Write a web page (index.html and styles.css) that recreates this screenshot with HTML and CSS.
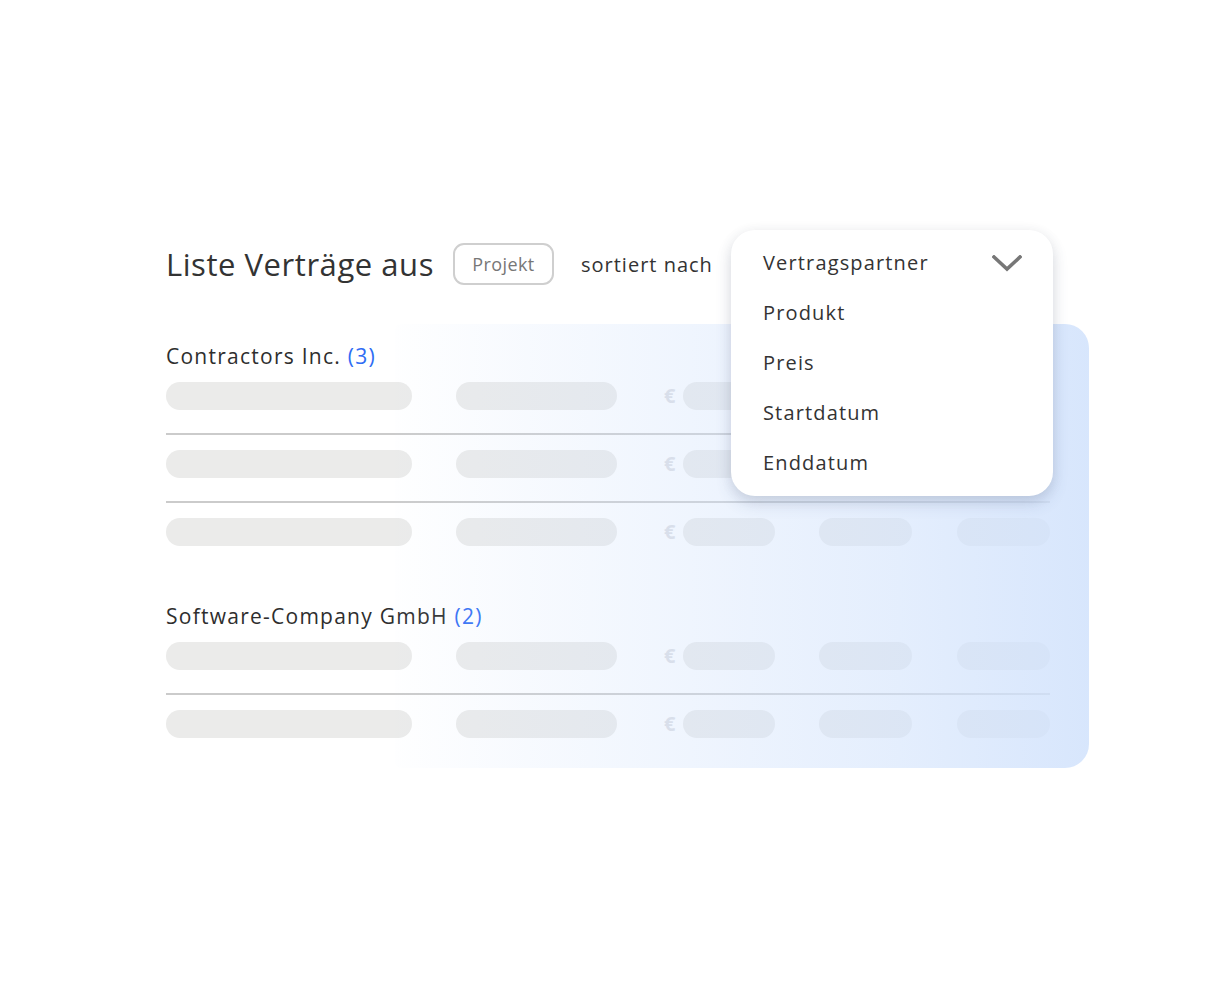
FILE: index.html
```html
<!DOCTYPE html>
<html lang="de">
<head>
<meta charset="utf-8">
<title>Liste Verträge</title>
<link rel="stylesheet" href="styles.css">
</head>
<body>
<div class="page">
  <div class="header">
    <h1 class="title">Liste Verträge aus</h1>
    <span class="pill">Projekt</span>
    <span class="sort-label">sortiert nach</span>
    <div class="dropdown">
      <ul class="options">
        <li>Vertragspartner</li>
        <li>Produkt</li>
        <li>Preis</li>
        <li>Startdatum</li>
        <li>Enddatum</li>
      </ul>
      <svg class="chevron" width="30" height="17" viewBox="0 0 30 17"><path d="M2 2 L15 14 L28 2" fill="none" stroke="#777" stroke-width="3.6" stroke-linecap="square"/></svg>
    </div>
  </div>

  <section class="group group-first">
    <h2 class="group-title">Contractors Inc. <span class="count">(3)</span></h2>
    <div class="row"><span class="bar b1"></span><span class="bar b2"></span><span class="euro">€</span><span class="bar b3"></span><span class="bar b4"></span><span class="bar b5"></span></div>
    <div class="divider"></div>
    <div class="row"><span class="bar b1"></span><span class="bar b2"></span><span class="euro">€</span><span class="bar b3"></span><span class="bar b4"></span><span class="bar b5"></span></div>
    <div class="divider"></div>
    <div class="row"><span class="bar b1"></span><span class="bar b2"></span><span class="euro">€</span><span class="bar b3"></span><span class="bar b4"></span><span class="bar b5"></span></div>
  </section>

  <section class="group group-second">
    <h2 class="group-title">Software-Company GmbH <span class="count">(2)</span></h2>
    <div class="row"><span class="bar b1"></span><span class="bar b2"></span><span class="euro">€</span><span class="bar b3"></span><span class="bar b4"></span><span class="bar b5"></span></div>
    <div class="divider"></div>
    <div class="row"><span class="bar b1"></span><span class="bar b2"></span><span class="euro">€</span><span class="bar b3"></span><span class="bar b4"></span><span class="bar b5"></span></div>
  </section>

  <div class="panel"></div>
</div>
</body>
</html>
```

FILE: styles.css
```css
* { box-sizing: border-box; }

html, body {
  margin: 0;
  padding: 0;
  background: #ffffff;
}

body {
  font-family: "Open Sans", "Noto Sans", "Liberation Sans", sans-serif;
  color: #2e2e2e;
  width: 1215px;
  height: 1000px;
  overflow: hidden;
}

.page {
  position: relative;
  width: 884px;
  margin-left: 166px;
  padding-top: 243px;
}

/* tinted glass panel lying over the placeholder rows */
.panel {
  position: absolute;
  left: 229px;
  top: 324px;
  width: 694px;
  height: 444px;
  border-radius: 6px 24px 24px 6px;
  background: linear-gradient(90deg,
    rgba(209, 226, 252, 0.02) 0%,
    rgba(209, 226, 252, 0.18) 20%,
    rgba(209, 226, 252, 0.34) 42%,
    rgba(209, 226, 252, 0.58) 72%,
    rgba(209, 226, 252, 0.86) 100%);
  z-index: 1;
  pointer-events: none;
}

.header {
  position: relative;
  z-index: 3;
  display: flex;
  align-items: center;
  height: 42px;
}

.title {
  margin: 0 19px 0 0;
  font-size: 31px;
  font-weight: 400;
  letter-spacing: 0.55px;
  color: #333;
  white-space: nowrap;
}

.pill {
  display: flex;
  align-items: center;
  justify-content: center;
  width: 101px;
  height: 42px;
  border: 2px solid #cfcfcf;
  border-radius: 11px;
  font-size: 18px;
  letter-spacing: 0.4px;
  color: #777;
  margin-right: 27px;
}

.sort-label {
  font-size: 20px;
  letter-spacing: 1px;
  color: #333;
  white-space: nowrap;
}

.dropdown {
  position: absolute;
  left: 565px;
  top: -13px;
  width: 322px;
  height: 266px;
  background: #fff;
  border-radius: 24px;
  box-shadow: 0 2px 14px rgba(0, 0, 0, 0.07), 0 8px 16px rgba(70, 90, 130, 0.16);
  padding: 8px 0 0 32px;
}

.options {
  list-style: none;
  margin: 0;
  padding: 0;
}

.options li {
  height: 50px;
  line-height: 50px;
  font-size: 20px;
  letter-spacing: 1.15px;
  color: #333;
}

.chevron {
  position: absolute;
  left: 261px;
  top: 25px;
}

.group {
  position: relative;
  z-index: 0;
}

.group-first { margin-top: 57px; }
.group-second { margin-top: 56px; }

.group-title {
  margin: 0 0 12px 0;
  height: 28px;
  line-height: 28px;
  font-size: 21px;
  font-weight: 400;
  letter-spacing: 1.25px;
  color: #2e2e2e;
}

.count { color: #2f6cf4; }

.row {
  display: flex;
  align-items: center;
  height: 28px;
}

.bar {
  display: block;
  height: 28px;
  border-radius: 14px;
  background: #ebebea;
}

.b1 { width: 246px; margin-right: 44px; }
.b2 { width: 161px; margin-right: 47px; }
.b3 { width: 92px; margin-right: 44px; }
.b4 { width: 93px; margin-right: 45px; }
.b5 { width: 93px; }

.euro {
  width: 19px;
  font-size: 20px;
  font-weight: 700;
  color: #dcdde2;
  line-height: 28px;
}

.divider {
  height: 2px;
  margin: 23px 0 15px;
  background: #cbcbcb;
}
```
